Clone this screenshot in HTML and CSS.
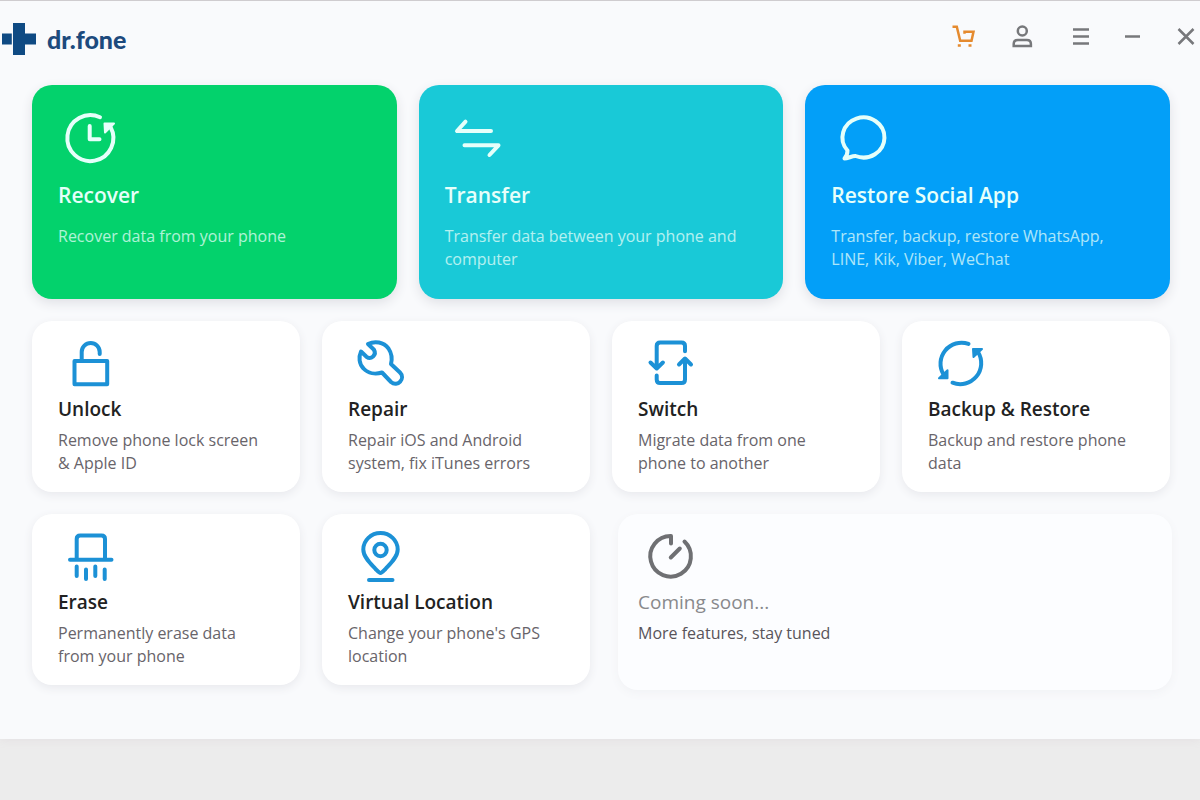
FILE: index.html
```html
<!DOCTYPE html>
<html lang="en">
<head>
<meta charset="utf-8">
<title>dr.fone</title>
<link rel="stylesheet" href="styles.css">
</head>
<body>
<div class="window">
  <header class="titlebar">
    <div class="brand">
      <svg class="brand-mark" viewBox="0 0 36 34" aria-hidden="true"><path d="M12 1h12v10.500h11v11H24V33H12zM1 11.500h9.800v11H1z"/></svg>
      <span class="brand-name">dr.fone</span>
    </div>
    <nav class="actions" aria-label="Account">
      <button class="tool cart" type="button" aria-label="Cart"><svg viewBox="0 0 24 24"><path d="M1.500 1.800h4.300l3.400 14h11.300l2-9H13.500v2"/><path d="M6.800 20.500h3M17.500 20.500h3"/></svg></button>
      <button class="tool" type="button" aria-label="Account"><svg viewBox="0 0 24 24"><circle cx="12.300" cy="6" r="4.500"/><path d="M3.700 21v-2c0-2.500 1.500-4 4-4h9.200c2.500 0 4 1.500 4 4v2z"/></svg></button>
      <button class="tool" type="button" aria-label="Menu"><svg viewBox="0 0 24 24"><path d="M4 4.500h16M4 11.500h16M4 18.500h16"/></svg></button>
    </nav>
    <div class="controls">
      <button class="tool" type="button" aria-label="Minimize"><svg viewBox="0 0 24 24"><path d="M5 11.500h15"/></svg></button>
      <button class="tool" type="button" aria-label="Close"><svg viewBox="0 0 24 24"><path d="M4.500 4l15 15M19.500 4l-15 15"/></svg></button>
    </div>
  </header>
  <main class="content">
    <section class="row heroes">
      <button class="card hero green" type="button">
        <svg class="icon" viewBox="0 0 64 64"><path d="M42 11.200A23 23 0 1 0 52.500 21"/><path d="M31.700 20v13.300h9.800"/><path class="solid" d="M46.500 17.500h9.500l-9 9z"/></svg>
        <span class="title">Recover</span>
        <span class="desc">Recover data from your phone</span>
      </button>
      <button class="card hero teal" type="button">
        <svg class="icon" viewBox="0 0 64 64"><path d="M20.500 15.700L12 25H46M19.500 39.300h34L44.500 49"/></svg>
        <span class="title">Transfer</span>
        <span class="desc">Transfer data between your phone and computer</span>
      </button>
      <button class="card hero blue" type="button">
        <svg class="icon" viewBox="0 0 64 64"><path d="M16.500 44.500A21 20 0 1 1 24.500 50C21 49.800 17 52.500 13.500 52.500c2-2 3-4.500 3-8z"/></svg>
        <span class="title">Restore Social App</span>
        <span class="desc">Transfer, backup, restore WhatsApp, LINE, Kik, Viber, WeChat</span>
      </button>
    </section>
    <section class="row tools">
      <button class="card small" type="button">
        <svg class="icon" viewBox="0 0 64 52"><path d="M16.500 24h32.700v23.200H16.500z"/><path d="M23.700 24v-9a9 9 0 0 1 18 0v2"/></svg>
        <span class="title">Unlock</span>
        <span class="desc">Remove phone lock screen &amp; Apple ID</span>
      </button>
      <button class="card small" type="button">
        <svg class="icon" viewBox="0 0 64 52"><path d="M20 7C27 3.500 35.500 5 40.500 11.500c3 4.500 4 9.500 2.500 15.500l9 8.500c6 6-2.500 15-9 9.500L34 35.500C27.500 37.500 20 36.500 15.500 31.500 11 27 10.500 20 13 14.500l5.500 5.300C23 23 29 18 26 12.800z"/></svg>
        <span class="title">Repair</span>
        <span class="desc">Repair iOS and Android system, fix iTunes errors</span>
      </button>
      <button class="card small" type="button">
        <svg class="icon" viewBox="0 0 64 52"><path d="M18.700 31V9q0-3.500 3.500-3.500h21.300q3.500 0 3.500 3.500v5.200M12.500 25.500l6.200 6 6.200-6M18.700 38.500v4q0 3.500 3.500 3.500h21.300q3.500 0 3.500-3.500V22M41 27.500l6-6 6 6"/></svg>
        <span class="title">Switch</span>
        <span class="desc">Migrate data from one phone to another</span>
      </button>
      <button class="card small" type="button">
        <svg class="icon" viewBox="0 0 64 52"><path d="M40.500 6.900A21 21 0 0 0 15.500 37.500M24.500 45.700A21 21 0 0 0 50 15"/><path class="solid" d="M11 41.200h8.500v-8zM45 12h9l-8.500 8z"/></svg>
        <span class="title">Backup &amp; Restore</span>
        <span class="desc">Backup and restore phone data</span>
      </button>
      <button class="card small" type="button">
        <svg class="icon" viewBox="0 0 64 52"><path d="M18.700 29V9q0-3.500 3.500-3.500h21.300q3.500 0 3.500 3.500v20M12 29.700h41.500M18.700 36.500v9.500M28 39.500v9.500M37.300 36.500v9.500M46.700 39.500v9.500"/></svg>
        <span class="title">Erase</span>
        <span class="desc">Permanently erase data from your phone</span>
      </button>
      <button class="card small" type="button">
        <svg class="icon" viewBox="0 0 64 52"><path d="M32.500 43c-1.500 0-3-2-5-4-5-5.500-12.200-12-12.200-19.500a17.200 16.500 0 0 1 34.400 0c0 7.500-7.200 14-12.200 19.500-2 2-3.500 4-5 4zM21 50h23.500"/><circle cx="32.500" cy="20" r="6.200"/></svg>
        <span class="title">Virtual Location</span>
        <span class="desc">Change your phone's GPS location</span>
      </button>
      <div class="card small soon">
        <svg class="icon" viewBox="0 0 64 52"><path d="M33 13.500v-7.500A20.300 20.300 0 1 0 46.500 11.500M32.800 27.500l9-9"/></svg>
        <span class="title">Coming soon...</span>
        <span class="desc">More features, stay tuned</span>
      </div>
    </section>
  </main>
</div>
</body>
</html>
```
FILE: styles.css
```css
* { box-sizing: border-box; }
body {
  margin: 0;
  min-height: 100vh;
  background: #ececec;
  font-family: "Open Sans", "Noto Sans", sans-serif;
}
.window {
  background: #f9fafc;
  border-top: 1px solid #cfcccf;
  box-shadow: 0 2px 8px #e5e2e4;
}
.titlebar {
  display: flex;
  align-items: center;
  height: 84px;
  padding: 0 2px 12px 1px;
}
.brand {
  display: flex;
  align-items: center;
  gap: 10px;
  margin-right: auto;
  padding-top: 4px;
}
.brand-mark { width: 36px; height: 34px; fill: #0f4a83; }
.brand-name {
  font-family: Lato, "Open Sans", sans-serif;
  font-size: 25px;
  font-weight: 900;
  line-height: 30px;
  color: #1d4a7d;
}
.actions { display: flex; gap: 35px; margin-right: 27px; }
.controls { display: flex; gap: 30px; }
.tool {
  width: 24px;
  height: 24px;
  padding: 0;
  border: 0;
  background: none;
  color: #77787b;
}
.tool.cart { color: #e58a2e; }
.tool svg, .icon {
  display: block;
  fill: none;
  stroke: currentColor;
}
.tool svg { width: 24px; height: 24px; stroke-width: 2.5; }
.content { padding: 0 30px 54px 32px; }
.row { display: grid; gap: 22px; }
.heroes { grid-template-columns: repeat(3, 1fr); margin-bottom: 22px; }
.tools { grid-template-columns: repeat(4, 1fr); }
.card {
  display: flex;
  flex-direction: column;
  align-items: flex-start;
  justify-content: flex-start;
  border: 0;
  border-radius: 20px;
  font-family: inherit;
  text-align: left;
  box-shadow: 0 4px 12px #dfe0e5;
}
.icon {
  flex: none;
  width: 64px;
  stroke-width: 4;
  stroke-linecap: round;
  stroke-linejoin: round;
}
.solid { fill: currentColor; stroke-width: 2; }
.title { font-weight: 600; }
.desc { font-size: 16px; line-height: 23px; }
.hero {
  min-height: 214px;
  padding: 21px 26px;
  color: #e6fffa;
}
.hero .icon { height: 64px; }
.hero .title { margin: 10px 0 15px; font-size: 21px; line-height: 30px; }
.hero .desc { opacity: 0.75; }
.green { background: #03d26c; }
.teal { background: #19c9d7; }
.blue { background: #039ff8; }
.small {
  min-height: 171px;
  padding: 16px 32px 0 26px;
  background: #fff;
  color: #1c91d6;
  box-shadow: 0 3px 10px #e8e9ed;
}
.small .icon { height: 52px; }
.small .title { margin: 7px 0; font-size: 19px; line-height: 26px; color: #222; }
.small .desc { color: #68646a; }
.small.soon {
  grid-column: span 2;
  margin: 0 -2px -5px 6px;
  min-height: 176px;
  padding: 16px 20px 0;
  background: #fcfdff;
  color: #6f7073;
  box-shadow: 0 3px 10px #f1f2f5;
}
.small.soon .title { color: #88898c; font-weight: 500; }
.small.soon .desc { color: #58545a; }
```
